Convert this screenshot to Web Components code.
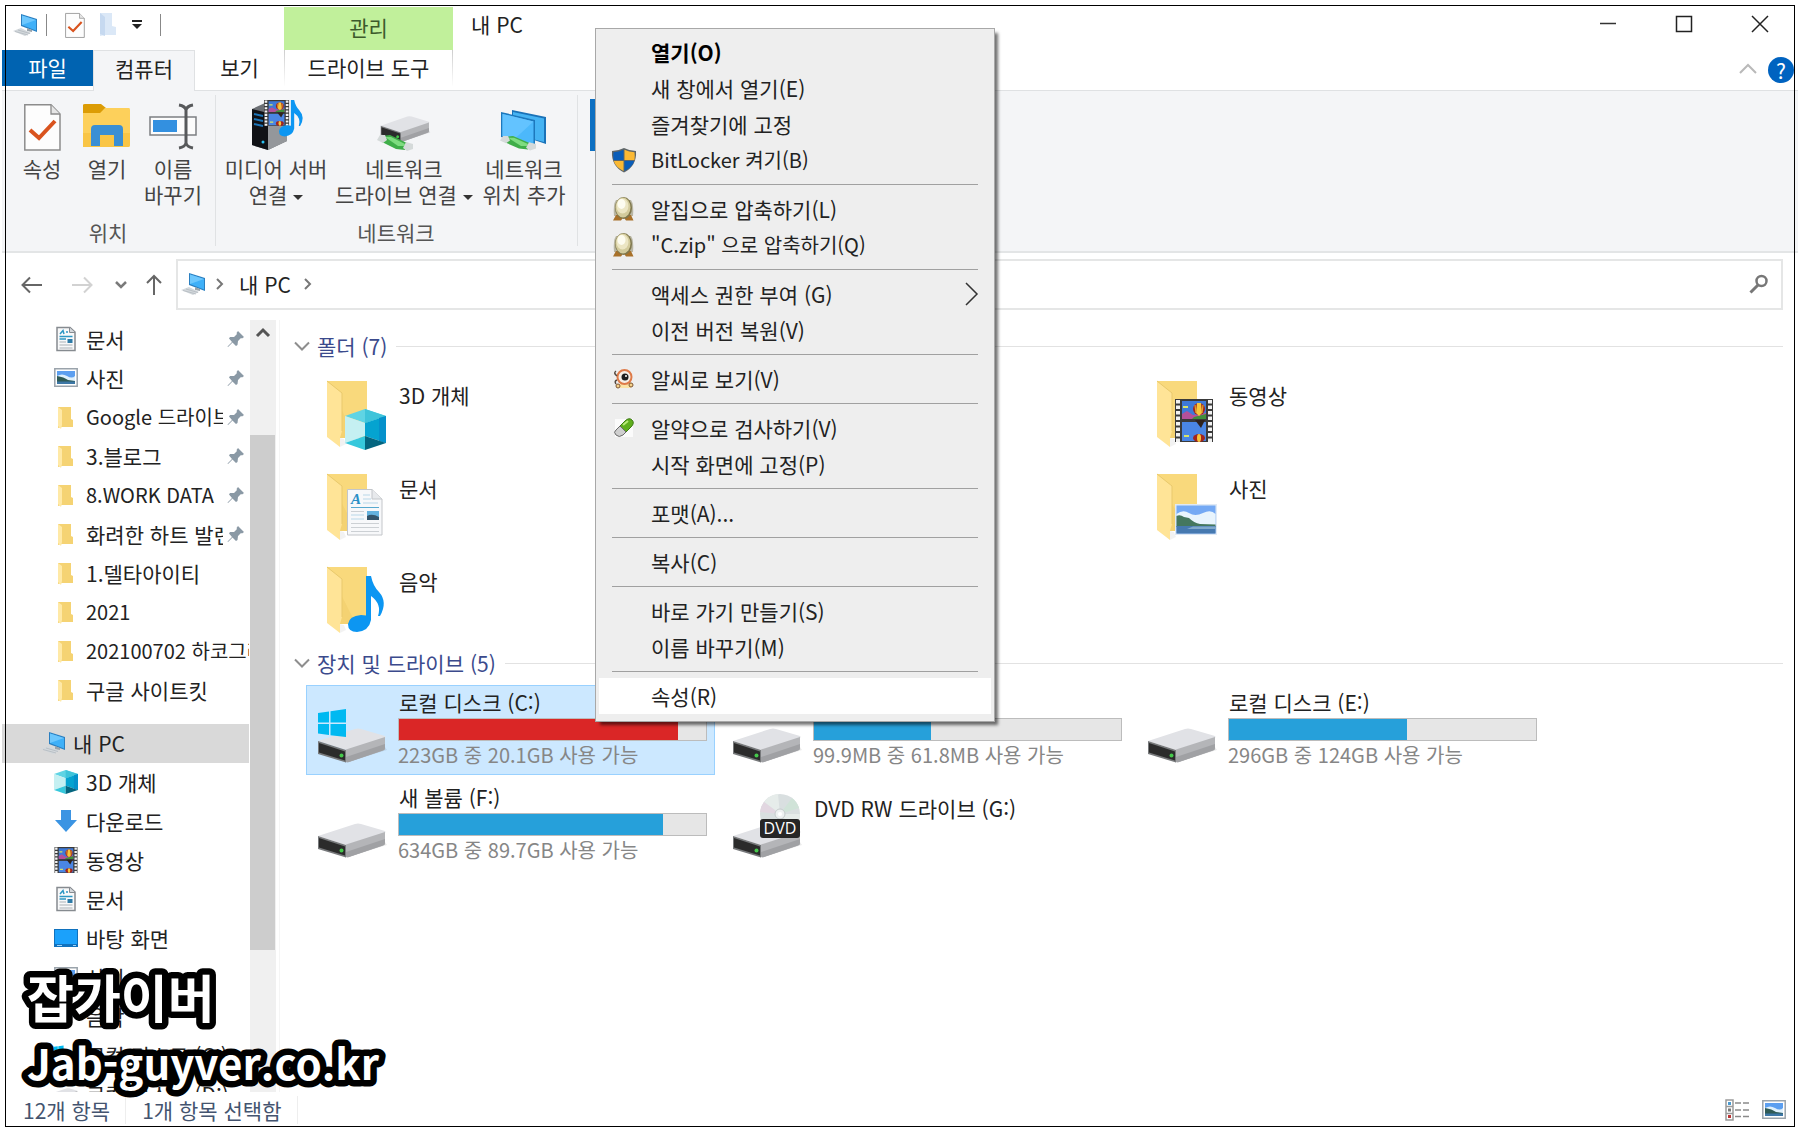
<!DOCTYPE html>
<html lang="ko">
<head>
<meta charset="utf-8">
<title>내 PC</title>
<style>
  body {
    margin: 0;
    background: #fff;
    color: #222;
    font: 21px/28px "Noto Sans CJK KR", "Noto Sans", sans-serif;
  }
</style>
</head>
<body>

<explorer-window>
  <title-bar slot="top" tool="관리">내 PC</title-bar>
  <ribbon-tabs slot="top"></ribbon-tabs>

  <ribbon-bar slot="top">
    <ribbon-group label="위치">
      <ribbon-button icon="properties" style="--w: 64px">속성</ribbon-button>
      <ribbon-button icon="open" style="--w: 66px">열기</ribbon-button>
      <ribbon-button icon="rename" style="--w: 66px">이름<br>바꾸기</ribbon-button>
    </ribbon-group>
    <ribbon-group label="네트워크">
      <ribbon-button icon="media" style="--w: 104px" drop>미디어 서버<br>연결</ribbon-button>
      <ribbon-button icon="netdrive" style="--w: 152px" drop>네트워크<br>드라이브 연결</ribbon-button>
      <ribbon-button icon="netplace" style="--w: 88px">네트워크<br>위치 추가</ribbon-button>
    </ribbon-group>
    <ribbon-group class="last">
      <ribbon-button icon="settings" style="--w: 52px"></ribbon-button>
    </ribbon-group>
  </ribbon-bar>

  <address-bar slot="top">내 PC</address-bar>

  <nav-pane slot="side">
    <nav-item icon="doc" pinned>문서</nav-item>
    <nav-item icon="photo" pinned>사진</nav-item>
    <nav-item icon="folder" pinned latin>Google 드라이브</nav-item>
    <nav-item icon="folder" pinned>3.블로그</nav-item>
    <nav-item icon="folder" pinned latin>8.WORK DATA</nav-item>
    <nav-item icon="folder" pinned>화려한 하트 발렌</nav-item>
    <nav-item icon="folder">1.델타아이티</nav-item>
    <nav-item icon="folder" latin>2021</nav-item>
    <nav-item icon="folder" latin>202100702 하코그라</nav-item>
    <nav-item icon="folder">구글 사이트킷</nav-item>
    <nav-item icon="pc" current>내 PC</nav-item>
    <nav-item icon="cube">3D 개체</nav-item>
    <nav-item icon="down">다운로드</nav-item>
    <nav-item icon="film">동영상</nav-item>
    <nav-item icon="doc">문서</nav-item>
    <nav-item icon="desktop">바탕 화면</nav-item>
    <nav-item icon="photo">사진</nav-item>
    <nav-item icon="note">음악</nav-item>
    <nav-item icon="windrive">로컬 디스크 (C:)</nav-item>
    <nav-item icon="smalldrive">로컬 디스크 (D:)</nav-item>
  </nav-pane>

  <item-section label="폴더 (7)" style="--row-gap: 3px">
    <folder-tile icon="folder3d">3D 개체</folder-tile>
    <folder-tile icon="foldervideo" style="grid-column: 3">동영상</folder-tile>
    <folder-tile icon="folderdoc">문서</folder-tile>
    <folder-tile icon="folderphoto" style="grid-column: 3">사진</folder-tile>
    <folder-tile icon="foldermusic">음악</folder-tile>
  </item-section>
  <item-section label="장치 및 드라이브 (5)" style="--row-gap: 5px">
    <drive-tile icon="drivewin" used="91" note="223GB 중 20.1GB 사용 가능" full selected>로컬 디스크 (C:)</drive-tile>
    <drive-tile icon="drive" used="38" note="99.9MB 중 61.8MB 사용 가능"></drive-tile>
    <drive-tile icon="drive" used="58" note="296GB 중 124GB 사용 가능">로컬 디스크 (E:)</drive-tile>
    <drive-tile icon="drive" used="86" note="634GB 중 89.7GB 사용 가능">새 볼륨 (F:)</drive-tile>
    <drive-tile icon="dvd">DVD RW 드라이브 (G:)</drive-tile>
  </item-section>

  <status-bar slot="bottom">
    <span>12개 항목</span>
    <span>1개 항목 선택함</span>
  </status-bar>

  <context-menu slot="over">
    <menu-item strong>열기(O)</menu-item>
    <menu-item>새 창에서 열기(E)</menu-item>
    <menu-item>즐겨찾기에 고정</menu-item>
    <menu-item icon="shield" latin>BitLocker 켜기(B)</menu-item>
    <menu-line></menu-line>
    <menu-item icon="egg">알집으로 압축하기(L)</menu-item>
    <menu-item icon="egg" latin>"C.zip" 으로 압축하기(Q)</menu-item>
    <menu-line></menu-line>
    <menu-item more>액세스 권한 부여 (G)</menu-item>
    <menu-item>이전 버전 복원(V)</menu-item>
    <menu-line></menu-line>
    <menu-item icon="alsee">알씨로 보기(V)</menu-item>
    <menu-line></menu-line>
    <menu-item icon="pill">알약으로 검사하기(V)</menu-item>
    <menu-item>시작 화면에 고정(P)</menu-item>
    <menu-line></menu-line>
    <menu-item>포맷(A)...</menu-item>
    <menu-line></menu-line>
    <menu-item>복사(C)</menu-item>
    <menu-line></menu-line>
    <menu-item>바로 가기 만들기(S)</menu-item>
    <menu-item>이름 바꾸기(M)</menu-item>
    <menu-line></menu-line>
    <menu-item active>속성(R)</menu-item>
  </context-menu>

  <site-mark slot="over" name="잡가이버" url="Jab-guyver.co.kr"></site-mark>
</explorer-window>

<script>
// ---------- drawing pieces shared by several icons ----------

const DRIVE = `
  <path d="M28 36 70 23 68 20 30 33z" fill="#000" opacity=".08"/>
  <path d="M1 14 38 2Q41 1 44 2L68 9Q69 10 68 11L29 23z" fill="#e1e2e6"/>
  <path d="M29 22.500 68 10V21Q68 23 66 23.500L32 35Q29 36 29 34z" fill="#b4b5b8"/>
  <path d="M29 30 68 17V21Q68 23 66 23.500L32 35Q29 36 29 34z" fill="#a0a1a4"/>
  <path d="M1 14 29 23V35.500L1 27z" fill="#77797b"/>
  <path d="M2 16 28 24.500V33.500L2 25.500z" fill="#2b2b2b"/>
  <circle cx="24.500" cy="28.500" r="2" fill="#45c94b"/>`;

const FOLDER = `
  <path d="M1 0H41V57H12z" fill="#f4d272"/>
  <path d="M1 0H41V57H30z" fill="#fbdc80" opacity=".7"/>
  <path d="M1 0 16 12V50L14 57V66L1 56z" fill="#ffe497"/>
  <path d="M1 0 16 12V50" fill="none" stroke="#e9c96c"/>
  <path d="M14 66 20 63 18 58 14 57z" fill="#000" opacity=".05"/>`;

const FILM = `
  <path d="M0 0H38V43H0z" fill="#3a3a3a"/>
  <path d="M3 1V43M35 1V43" stroke="#f2f2f2" stroke-width="4" stroke-dasharray="3.500 2"/>
  <path d="M7 2H31V20H7z" fill="#3e79d8"/>
  <path d="M7 23H31V42H7z" fill="#4a86e4"/>
  <path d="M7 15 12 12 18 16 31 14V20H7z" fill="#b4509a"/>
  <path d="M19 18 31 15V20H17z" fill="#3f8f3b"/>
  <ellipse cx="24" cy="10" rx="6" ry="6" fill="#a3241c"/>
  <path d="M22 4H26L27 14 24 17 21 14z" fill="#f6c63a"/>
  <path d="M20 6 21 14M28 6 27 14" stroke="#e0a52c" stroke-width="1.200"/>
  <path d="M20 21H30L26 29z" fill="#30231d"/>
  <ellipse cx="24" cy="39" rx="6" ry="4" fill="#a3241c"/>
  <ellipse cx="24" cy="39" rx="2" ry="4" fill="#f6c63a"/>
  <path d="M8 8H13M9 37H14" stroke="#d6e36b" stroke-width="2"/>`;

const CUBE = `
  <path d="M20 0 41 7 20 14 0 7z" fill="#5fd4e4"/>
  <path d="M20 0 41 7 20 14z" fill="#3fc4da"/>
  <path d="M0 7 20 14V27L0 34z" fill="#c5f0f2"/>
  <path d="M20 14 41 7V34L20 27z" fill="#05a3d0"/>
  <path d="M34 9 41 7V34L34 32z" fill="#0591cb"/>
  <path d="M0 34 20 27V41z" fill="#36c8dc"/>
  <path d="M20 27 41 34 20 41z" fill="#04657f"/>`;

const PHOTO = `
  <path d="M0 0H42V31H0z" fill="#dfe9f5"/>
  <path d="M1.500 1.500H40.500V29.500H1.500z" fill="#74a9f4"/>
  <path d="M1.500 10Q8 5 14 9T28 9 40.500 10V22H1.500z" fill="#e8f4fd"/>
  <path d="M1.500 12Q5 10 9 13L14 14Q19 19 25 20L40.500 20.500V23H1.500z" fill="#44775f"/>
  <path d="M1.500 22H40.500V29.500H1.500z" fill="#4679b0"/>
  <path d="M18 22.500H40.500V25H12z" fill="#7fa9cc"/>`;

const SHEET = `
  <path d="M.5.5H25L35 10V46H.5z" fill="#f7f8fa" stroke="#c3c6ca"/>
  <path d="M25 .5V10H35" fill="#e7e9ec" stroke="#c3c6ca"/>
  <text x="4" y="15" font-family="Liberation Serif" font-size="15" font-style="italic" font-weight="700" fill="#2b8fc6">A</text>
  <path d="M16 6H23M16 10H24M16 14H31M4 26H17M4 30H17" stroke="#b8d7e8"/>
  <path d="M4 18.500H32" stroke="#58a9cf"/>
  <path d="M4 22.500H17M4 34.500H32M4 38.500H32M4 42.500H32" stroke="#ccd0d4"/>
  <path d="M20 22H32V31H20z" fill="#64b2de"/><path d="M20 27Q25 24 32 28V31H20z" fill="#34556b"/>`;

const NOTE = `
  <path d="M18 0H23Q25 10 31 16 40 26 32 40H30Q34 28 23 20V44Q21 55 9 56 0 56 0 48 1 40 13 39L18 39.500z" fill="#0c96f2"/>`;

const WINLOGO = `<path d="M0 4 11 2.500V13.500H0zM12.500 2.300 28 0V13.500H12.500zM0 15H11V26L0 24.500zM12.500 15H28V28L12.500 26.200z" fill="#00b9f1"/>`;

const PC = `
  <path d="M8 1 24 6V19L8 13z" fill="#2b7fc0"/>
  <path d="M9 2.500 23 7V17.500L9 12z" fill="#3fb0f8"/>
  <path d="M9 2.500 23 7 9 12z" fill="#6dc7fd"/>
  <path d="M14 15 19 17V19L14 18z" fill="#9aa4ab"/>
  <path d="M0 18 8 15 18 20 12 23z" fill="#d3d8dc"/>
  <path d="M2 18.500 15 22M5 17 17 20.500" stroke="#aeb5ba" stroke-width=".7"/>`;

const CHECKDOC = `
  <path d="M.8.8H27L36 10V46H.8z" fill="#fdfdfd" stroke="#8c8c8c" stroke-width="1.500"/>
  <path d="M27 1V10H36" fill="#e6e6e6" stroke="#8c8c8c" stroke-width="1.300"/>
  <path d="M6 26 15 34 31 17" fill="none" stroke="#d9531e" stroke-width="4"/>`;

const PLUG = `
  <path d="M2 1 10 0 27 8 25 15 16 14 2 7z" fill="#3fae49"/>
  <path d="M5 2 11 2 25 9 24 11 18 11z" fill="#7edc80"/>
  <path d="M0 0H5L7 5 3 8-3 5z" fill="#d5dada"/>
  <path d="M26 7 33 9V14L27 16 23 13z" fill="#d5dada"/>`;

// name: [width, height, viewBox, drawing]
const ICONS = {
  pc: [26, 24, '0 0 26 24', PC],
  check: [20, 25, '0 0 37 47', CHECKDOC],
  paleFolder: [18, 24, '0 0 18 24', '<path d="M1 0H13V13L17 14V22H6L1 23z" fill="#dbe8f7"/><path d="M1 0 6 4V23L1 21z" fill="#c6d9f0"/>'],
  more: [12, 12, '0 0 12 12', '<path d="M1 2H11" stroke="#222" stroke-width="2"/><path d="M1 5H11L6 10z" fill="#222"/>'],
  min: [18, 18, '0 0 18 18', '<path d="M1 8.500H17" stroke="#333" stroke-width="1.500"/>'],
  max: [18, 18, '0 0 18 18', '<path d="M1.500 1.500H16.500V16.500H1.500z" fill="none" stroke="#222" stroke-width="1.500"/>'],
  close: [18, 18, '0 0 18 18', '<path d="M1 1 17 17M17 1 1 17" stroke="#222" stroke-width="1.500"/>'],
  up: [18, 12, '0 0 18 12', '<path d="M1 10 9 2 17 10" fill="none" stroke="#b9b9b9" stroke-width="2"/>'],

  properties: [37, 47, '0 0 37 47', CHECKDOC],
  open: [48, 48, '0 0 48 48', `
    <path d="M0 2Q0 1 2 1H18L23 5 18 11H0z" fill="#dc9c05"/>
    <path d="M0 10H17L22 5H46Q47 5 47 7V42Q47 44 45 44H0z" fill="#fdd05b"/>
    <path d="M0 30H47V42Q47 44 45 44H0z" fill="#f9c546"/>
    <path d="M8 26Q8 22 12 22H36Q40 22 40 26V43H31V32H17V43H8z" fill="#3a8fd4"/>`],
  rename: [48, 47, '0 0 48 47', `
    <path d="M1 13H47V31H1z" fill="#fcfcfc" stroke="#7c7f82" stroke-width="1.500"/>
    <path d="M4 16H28V28H4z" fill="#3390e0"/>
    <path d="M30 1Q36 2 37 6 38 2 44 1M37 5V41M30 44Q36 43 37 39 38 43 44 44" fill="none" stroke="#57595b" stroke-width="3"/>`],
  media: [54, 52, '0 0 54 52', `
    <path d="M3 10 16 4 38 10V42L19 51 3 46z" fill="#6c6f74"/>
    <path d="M3 10 19 14V51L3 46z" fill="#101216"/>
    <path d="M19 14 38 10V42L19 51z" fill="#94979b"/>
    <path d="M5 15 14 17M5 20 14 22M5 25 14 27" stroke="#1d75b8" stroke-width="2"/>
    <circle cx="14" cy="43" r="1.500" fill="#2cc4f5"/>
    <g transform="translate(15 1) scale(.66 .6)">${FILM}</g>
    <g transform="translate(30 1) scale(.66 .65)">${NOTE}</g>`],
  netdrive: [54, 36, '0 0 54 36', `
    <g transform="translate(3 0) scale(.72 .76)">${DRIVE}</g>
    <g transform="translate(3 20)">${PLUG}</g>`],
  netplace: [48, 42, '0 0 48 42', `
    <path d="M12 1 46 8V35L34 31 12 25z" fill="#1a72b8"/><path d="M13 3 44 9.500V33L13 25z" fill="#45b3f3"/>
    <path d="M1 3 35 11V39L1 28z" fill="#1d78bd"/><path d="M2.500 5 33.500 12.500V36.500L2.500 27z" fill="#4cb8fb"/>
    <path d="M2.500 5 33.500 12.500 14 30.500 2.500 27z" fill="#63c3ff"/>
    <g transform="translate(3 27) scale(1 .9)">${PLUG}</g>`],
  settings: [48, 52, '0 0 48 52', '<path d="M0 0H48V52H0z" fill="#0d6fc1"/>'],

  back: [22, 20, '0 0 22 20', '<path d="M21 10H2M9 2.500 1.500 10 9 17.500" fill="none" stroke="#666" stroke-width="2"/>'],
  forward: [22, 20, '0 0 22 20', '<path d="M1 10H20M13 2.500 20.500 10 13 17.500" fill="none" stroke="#d2d2d2" stroke-width="2"/>'],
  recent: [12, 10, '0 0 12 10', '<path d="M1 2 6 7 11 2" fill="none" stroke="#7a7a7a" stroke-width="2.500"/>'],
  parent: [16, 22, '0 0 16 22', '<path d="M8 21V2M1 9 8 2 15 9" fill="none" stroke="#666" stroke-width="2"/>'],
  crumb: [8, 12, '0 0 8 12', '<path d="M1 1 6 6 1 11" fill="none" stroke="#777" stroke-width="2"/>'],
  search: [20, 20, '0 0 20 20', '<circle cx="12.500" cy="7" r="5" fill="none" stroke="#777" stroke-width="2.500"/><path d="M9 11 1.500 18.500" stroke="#777" stroke-width="3"/>'],

  doc: [24, 26, '0 0 24 26', `
    <path d="M3 1.500H16L21 6V24.500H3z" fill="#f8f9fa" stroke="#868b90" stroke-width="1.500"/>
    <path d="M15.500 1.500V6.500H21" fill="#d5d9dd" stroke="#868b90"/>
    <path d="M6 8 9 4.500 10 8M12 6H14M5.500 10.500H18.500M5.500 13H12" stroke="#2d97c4" stroke-width="1.500" fill="none"/>
    <path d="M5.500 16H12M5.500 19H18.500M5.500 22H18.500" stroke="#aab0b5"/>
    <path d="M13.500 13H18.500V17H13.500z" fill="#2d7ba8"/>`],
  photo: [24, 20, '0 0 24 20', `
    <path d="M.8.8H23.200V18.200H.8z" fill="#fff" stroke="#9aa3ab" stroke-width="1.500"/>
    <path d="M3 3H21V16H3z" fill="#5c9ff0"/><path d="M3 8Q8 5 13 8T21 8V13H3z" fill="#def0fc"/>
    <path d="M3 8Q10 9 14 12L21 13V14H3z" fill="#2f5a55"/><path d="M3 13.500H21V16H3z" fill="#3d77a6"/>`],
  folder: [24, 24, '0 0 24 24', `
    <path d="M4 2H17V14L19 15V22H8L4 23z" fill="#f5d373"/>
    <path d="M4 2 8 5V20L7 24 4 21z" fill="#ffe9a6"/>`],
  cube: [24, 24, '0 0 41 41', CUBE],
  down: [24, 24, '0 0 24 24', '<path d="M7 1H17V11H23L12 23 1 11H7z" fill="#3b94e3"/>'],
  film: [24, 26, '0 0 38 43', FILM],
  desktop: [24, 20, '0 0 24 20', '<path d="M0 1H24V19H0z" fill="#1072be"/><path d="M1 2H23V16H1z" fill="#1ba1fb"/><path d="M3 17.500H8M19 17.500H22" stroke="#9fd6fb"/>'],
  note: [24, 24, '-8 -2 56 60', NOTE],
  windrive: [24, 22, '0 0 70 56', `<g transform="translate(0 20)">${DRIVE}</g>${WINLOGO}`],
  smalldrive: [24, 14, '0 0 70 37', DRIVE],
  pin: [18, 18, '0 0 18 18', '<path d="M11 1 17 7 15 8.500 14 8 11 11 10.500 15 9 16 5.500 12.500 1 17 .5 16.500 5 12 2 8.500 3 7 7 7 10 4 9.500 3z" fill="#8a99a5"/>'],
  scrollUp: [14, 10, '0 0 14 10', '<path d="M1 8 7 2 13 8" fill="none" stroke="#555" stroke-width="3"/>'],
  fold: [16, 10, '0 0 16 10', '<path d="M1 1.500 8 8.500 15 1.500" fill="none" stroke="#8e8e8e" stroke-width="2"/>'],

  folder3d: [66, 72, '0 0 66 72', `${FOLDER}<g transform="translate(19 28)">${CUBE}</g>`],
  folderdoc: [66, 72, '0 0 66 72', `${FOLDER}<g transform="translate(21 15)">${SHEET}</g>`],
  foldermusic: [66, 72, '0 0 66 72', `${FOLDER}<g transform="translate(22 9)">${NOTE}</g>`],
  foldervideo: [66, 72, '0 0 66 72', `${FOLDER}<g transform="translate(19 18)">${FILM}</g>`],
  folderphoto: [66, 72, '0 0 66 72', `${FOLDER}<g transform="translate(19 30)">${PHOTO}</g>`],
  drive: [70, 36, '0 0 70 36', DRIVE],
  drivewin: [70, 54, '0 0 70 54', `<g transform="translate(0 18)">${DRIVE}</g><g transform="translate(1 0)">${WINLOGO}</g>`],
  dvd: [70, 64, '0 0 70 64', `
    <g transform="translate(0 28)">${DRIVE}</g>
    <circle cx="48" cy="20" r="20" fill="#d9dfe0"/>
    <path d="M48 20 32 8A20 20 0 0 1 46 0zM48 20 68 20A20 20 0 0 1 62 34z" fill="#e6ecea"/>
    <path d="M48 20 28 18A20 20 0 0 1 32 8z" fill="#e2d7e1"/>
    <path d="M48 20 60 4A20 20 0 0 1 67 14z" fill="#d0e3d8"/>
    <circle cx="48" cy="20" r="5" fill="#eef1f1" stroke="#c5cbcc"/><circle cx="48" cy="20" r="2" fill="#fff"/>
    <rect x="28" y="25" width="40" height="19" rx="3" fill="#262626"/>
    <text x="48" y="40" text-anchor="middle" font-family="Open Sans" font-size="16" fill="#fff">DVD</text>`],

  shield: [26, 26, '0 0 26 26', `
    <path d="M13 1Q19 4 25 4 26 19 13 25.500 0 19 1 4 7 4 13 1z" fill="#5f6668"/>
    <path d="M12.500 2.800V13H2.500Q2 9 2.500 5.200 8 5 12.500 2.800z" fill="#0a5db8"/>
    <path d="M13.500 2.800V13H23.500Q24 9 23.500 5.200 18 5 13.500 2.800z" fill="#fbb934"/>
    <path d="M12.500 14V24Q4.500 20 2.800 14z" fill="#fbb934"/>
    <path d="M13.500 14V24Q21.500 20 23.200 14z" fill="#0a5db8"/>`],
  egg: [26, 26, '0 0 26 26', `
    <path d="M5 4Q2 8 3 20H22Q23 8 20 4z" fill="#b9b6a4"/>
    <path d="M2 24.500 5 19H20L22.500 24.500H15L12.500 21 10 24.500z" fill="#a8712a"/>
    <ellipse cx="12.500" cy="12" rx="8.500" ry="11" fill="#7f774c"/>
    <ellipse cx="12" cy="11.500" rx="7.500" ry="10" fill="#d3cb9c"/>
    <ellipse cx="11.500" cy="10" rx="6" ry="7.500" fill="#ece6c4"/>
    <ellipse cx="10.500" cy="8" rx="4" ry="5" fill="#fdfcf0"/>`],
  alsee: [26, 22, '0 0 26 22', `
    <path d="M9 14H20V20H9z" fill="#fbe3a6"/>
    <circle cx="13.500" cy="9" r="7" fill="#f6efe6" stroke="#de7a48" stroke-width="2"/>
    <circle cx="14" cy="9" r="3.500" fill="#1d1d1d"/><circle cx="15" cy="8" r="1" fill="#fff"/>
    <path d="M5 3Q2 5 6 8M6 12Q3 13 5 16" fill="none" stroke="#55493f" stroke-width="1.500"/>
    <circle cx="7" cy="18" r="2" fill="#f5d28a" stroke="#7e5430"/><circle cx="20" cy="17" r="2" fill="#f5d28a" stroke="#7e5430"/>`],
  pill: [26, 20, '0 0 26 20', `
    <path d="M4 1H22V19H4z" fill="#fbfbfb"/>
    <path d="M9 8 14 3Q18-1 21 2T20 9L15 14z" fill="#5fae1d" stroke="#3c7a12"/>
    <path d="M9 8 15 14 12 17Q8 20 5 17T5 12z" fill="#cfcfcf" stroke="#6b6b6b"/>
    <path d="M12 7 17 3" stroke="#b9ea78" stroke-width="2"/>`],
  submenu: [14, 24, '0 0 14 24', '<path d="M1 1 12 12 1 23" fill="none" stroke="#333" stroke-width="1.500"/>'],
  details: [26, 22, '0 0 26 22', `
    <path d="M1 1H8V21H1zM1 7.500H8M1 14.500H8" fill="#fff" stroke="#9a9a9a" stroke-width="1.500"/>
    <path d="M3 3H6V6H3z" fill="#4a9ad0"/><path d="M3 9.500H6V12.500H3z" fill="#777"/><path d="M3 16H6V19H3z" fill="#b33"/>
    <path d="M10 4H16M18 4H24M10 11H16M18 11H24M10 17.500H16M18 17.500H24" stroke="#8a8a8a" stroke-width="1.500"/>`],
};

// ---------- base ----------

const RESET = `
  button {
    margin: 0;
    padding: 0;
    border: 0;
    background: none;
    color: inherit;
    font: inherit;
    cursor: default;
  }
`;

class ShadowElement extends HTMLElement {

  constructor() {
    super();

    this.attachShadow({ mode: 'open' });
  }

  connectedCallback() {
    this.shadowRoot.innerHTML = `<style>:host { display: block; } ${RESET} ${this.css()}</style>${this.html()}`;
  }

  css() {
    return '';
  }

  html() {
    return '<slot></slot>';
  }

  icon(name) {
    return name ? `<explorer-icon name="${name}"></explorer-icon>` : '';
  }

}

class ExplorerIcon extends ShadowElement {

  css() {
    return `
      :host { flex: none; }
      svg { display: block; overflow: visible; }
    `;
  }

  html() {
    const [width, height, box, drawing] = ICONS[this.getAttribute('name')];

    return `<svg width="${width}" height="${height}" viewBox="${box}" aria-hidden="true">${drawing}</svg>`;
  }

}

// ---------- frame ----------

class ExplorerWindow extends ShadowElement {

  css() {
    return `
      :host {
        position: relative;
        display: flex;
        flex-direction: column;
        box-sizing: border-box;
        height: 100vh;
        padding: 2px;
        overflow: hidden;
      }
      /* thin black frame laid over the bars */
      :host::after {
        content: '';
        position: absolute;
        inset: 5px;
        border: 1px solid #000;
        pointer-events: none;
      }
      .body {
        display: flex;
        flex: 1;
        min-height: 0;
      }
      main {
        flex: 1;
        min-width: 0;
        padding: 12px 15px 0 26px;
        border-left: 1px solid #f5f5f5;
        overflow: hidden;
      }
    `;
  }

  html() {
    return `
      <slot name="top"></slot>
      <div class="body">
        <slot name="side"></slot>
        <main><slot></slot></main>
      </div>
      <slot name="bottom"></slot>
      <slot name="over"></slot>
    `;
  }

}

class TitleBar extends ShadowElement {

  css() {
    return `
      :host {
        display: flex;
        height: 48px;
      }
      .quick {
        display: flex;
        align-items: center;
        box-sizing: border-box;
        width: 282px;
        padding: 0 0 2px 11px;
      }
      .quick i { width: 1px; height: 22px; background: #888; }
      .quick i:first-of-type { margin: 0 18px 0 7px; }
      .quick i:last-of-type { margin-left: 17px; }
      .quick button + button { margin-left: 14px; }
      .tool {
        width: 169px;
        height: 43px;
        margin-top: 5px;
        background: #c1f09b;
        color: #3c5a2b;
        line-height: 40px;
        text-align: center;
      }
      h1 {
        flex: 1;
        margin: 0 0 0 18px;
        font-size: inherit;
        font-weight: 400;
        line-height: 44px;
      }
      .box {
        display: flex;
        align-items: center;
        justify-content: center;
        width: 76px;
        height: 44px;
      }
    `;
  }

  html() {
    return `
      <div class="quick">
        ${this.icon('pc')}<i></i>
        <button aria-label="속성">${this.icon('check')}</button>
        <button aria-label="새 폴더">${this.icon('paleFolder')}</button>
        <button aria-label="사용자 지정">${this.icon('more')}</button><i></i>
      </div>
      <div class="tool">${this.getAttribute('tool')}</div>
      <h1><slot></slot></h1>
      <button class="box" aria-label="최소화">${this.icon('min')}</button>
      <button class="box" aria-label="최대화">${this.icon('max')}</button>
      <button class="box" aria-label="닫기">${this.icon('close')}</button>
    `;
  }

}

class RibbonTabs extends ShadowElement {

  css() {
    return `
      :host {
        display: flex;
        height: 41px;
        background: linear-gradient(#dfe1e3, #dfe1e3) bottom / 100% 1px no-repeat;
      }
      button { height: 36px; line-height: 34px; padding-bottom: 2px; }
      .file { width: 91px; background: #0063b1; color: #fff; }
      .current {
        box-sizing: border-box;
        width: 102px;
        height: 41px;
        padding-bottom: 6px;
        border: 1px solid #dfe1e3;
        border-bottom: 0;
        background: #f4f5f7;
      }
      .view { width: 89px; }
      .tool {
        width: 169px;
        border: 1px solid;
        border-width: 0 1px;
        border-image: linear-gradient(#ccc, #fff) 1;
        box-sizing: border-box;
      }
      .right {
        display: flex;
        flex: 1;
        align-items: center;
        justify-content: flex-end;
        gap: 11px;
        padding: 0 4px 2px 0;
      }
      .help {
        width: 26px;
        height: 26px;
        padding: 0;
        border-radius: 50%;
        background: #0063c0;
        color: #fff;
        line-height: 26px;
      }
    `;
  }

  html() {
    return `
      <button class="file">파일</button>
      <button class="current">컴퓨터</button>
      <button class="view">보기</button>
      <button class="tool">드라이브 도구</button>
      <div class="right">
        <button aria-label="리본 최소화">${this.icon('up')}</button>
        <button class="help">?</button>
      </div>
    `;
  }

}

class RibbonBar extends ShadowElement {

  css() {
    return `
      :host {
        display: flex;
        box-sizing: border-box;
        height: 162px;
        padding: 4px 0 5px;
        border-bottom: 2px solid #e3e5e6;
        background: #f4f5f7;
      }
    `;
  }

}

class RibbonGroup extends ShadowElement {

  css() {
    return `
      :host {
        display: flex;
        flex-direction: column;
        justify-content: space-between;
        border-right: 1px solid #e0e2e4;
        padding: 0 9px 0 8px;
      }
      :host(.last) { border: 0; padding-left: 10px; }
      .row { display: flex; }
      .label { color: #555; text-align: center; }
    `;
  }

  html() {
    return `
      <div class="row"><slot></slot></div>
      <div class="label">${this.getAttribute('label') || ''}</div>
    `;
  }

}

class RibbonButton extends ShadowElement {

  css() {
    return `
      button {
        width: var(--w);
        color: #444;
        line-height: 26px;
        white-space: nowrap;
      }
      .pic {
        display: flex;
        align-items: flex-end;
        justify-content: center;
        height: 56px;
        margin-bottom: 4px;
      }
      b {
        display: inline-block;
        margin-left: 6px;
        border: 5px solid transparent;
        border-top-color: #333;
        border-bottom: 0;
        vertical-align: middle;
      }
    `;
  }

  html() {
    return `
      <button>
        <span class="pic">${this.icon(this.getAttribute('icon'))}</span>
        <slot></slot>${this.hasAttribute('drop') ? '<b></b>' : ''}
      </button>
    `;
  }

}

class AddressBar extends ShadowElement {

  css() {
    return `
      :host {
        display: flex;
        align-items: center;
        box-sizing: border-box;
        height: 67px;
        padding: 0 15px 4px 19px;
      }
      .go { display: flex; align-items: center; width: 155px; }
      .go button:nth-child(2) { margin-left: 28px; }
      .go button:nth-child(3) { margin-left: 22px; }
      .go button:nth-child(4) { margin-left: 19px; }
      .path {
        display: flex;
        flex: 1;
        align-items: center;
        box-sizing: border-box;
        height: 51px;
        padding: 0 12px 2px 3px;
        border: 2px solid #e5e6e6;
      }
      .path > :nth-child(2) { margin: 0 15px 0 9px; }
      .path > :nth-child(4) { flex: 1; margin-left: 13px; }
    `;
  }

  html() {
    return `
      <div class="go">
        <button aria-label="뒤로">${this.icon('back')}</button>
        <button aria-label="앞으로">${this.icon('forward')}</button>
        <button aria-label="최근 위치">${this.icon('recent')}</button>
        <button aria-label="위로">${this.icon('parent')}</button>
      </div>
      <div class="path">
        ${this.icon('pc')}
        ${this.icon('crumb')}
        <button><slot></slot></button>
        ${this.icon('crumb')}
        <button aria-label="검색">${this.icon('search')}</button>
      </div>
    `;
  }

}

// ---------- side pane ----------

class NavPane extends ShadowElement {

  css() {
    return `
      :host {
        display: flex;
        width: 277px;
        overflow: hidden;
      }
      nav { width: 247px; overflow: hidden; }
      .scroll {
        display: flex;
        flex-direction: column;
        width: 26px;
        margin-left: 1px;
        background: #f0f0f0;
      }
      .scroll button { height: 26px; padding-left: 6px; }
      .before { flex: 89; }
      .thumb { flex: 515; width: 25px; background: #cdcdcd; }
      .after { flex: 142; }
    `;
  }

  html() {
    return `
      <nav><slot></slot></nav>
      <div class="scroll">
        <button aria-label="위로 스크롤">${this.icon('scrollUp')}</button>
        <div class="before"></div>
        <div class="thumb"></div>
        <div class="after"></div>
      </div>
    `;
  }

}

class NavItem extends ShadowElement {

  css() {
    return `
      a {
        display: flex;
        align-items: center;
        gap: 8px;
        box-sizing: border-box;
        height: 39px;
        padding: 0 0 2px 52px;
        color: inherit;
        text-decoration: none;
        white-space: nowrap;
      }
      span { flex: 1; overflow: hidden; }
      :host([latin]) { font-size: 20px; }
      :host([pinned]) a { padding-right: 4px; gap: 4px; }
      :host([pinned]) span { margin-left: 4px; }
      :host([current]) { margin-top: 14px; background: #d9d9d9; }
      :host([current]) a { padding-left: 39px; gap: 6px; }
    `;
  }

  html() {
    return `
      <a href="#">
        ${this.icon(this.getAttribute('icon'))}
        <span><slot></slot></span>
        ${this.hasAttribute('pinned') ? this.icon('pin') : ''}
      </a>
    `;
  }

}

// ---------- content ----------

class ItemSection extends ShadowElement {

  css() {
    return `
      :host { margin-bottom: 5px; }
      h2 {
        display: flex;
        align-items: center;
        margin: 0 0 8px -12px;
        color: #3b4a8c;
        font-size: inherit;
        font-weight: 400;
      }
      h2 span { margin: 0 9px 0 7px; }
      h2::after {
        content: '';
        flex: 1;
        height: 1px;
        background: #e2e2e2;
      }
      .grid {
        display: grid;
        grid-template-columns: repeat(auto-fill, 409px);
        gap: var(--row-gap) 6px;
      }
    `;
  }

  html() {
    return `
      <h2>${this.icon('fold')}<span>${this.getAttribute('label')}</span></h2>
      <div class="grid"><slot></slot></div>
    `;
  }

}

class FolderTile extends ShadowElement {

  css() {
    return `
      :host {
        display: flex;
        gap: 7px;
        box-sizing: border-box;
        height: 90px;
        padding: 13px 0 0 20px;
      }
    `;
  }

  html() {
    return `${this.icon(this.getAttribute('icon'))}<span><slot></slot></span>`;
  }

}

class DriveTile extends ShadowElement {

  css() {
    return `
      :host {
        display: flex;
        gap: 11px;
        box-sizing: border-box;
        height: 90px;
        padding: 2px 7px 0 10px;
        border: 1px solid transparent;
      }
      :host([selected]) { border-color: #99d1ff; background: #cce8ff; }
      explorer-icon { align-self: flex-end; margin-bottom: 11px; }
      .text { flex: 1; }
      .name { min-height: 28px; padding-left: 1px; }
      :host(:not([note])) .name { padding-top: 11px; }
      .bar {
        box-sizing: border-box;
        height: 23px;
        margin-top: 2px;
        border: 1px solid #bcbcbc;
        background: #e6e6e6;
      }
      .bar div { width: var(--used); height: 100%; background: #26a0da; }
      :host([full]) .bar div { background: #da2626; }
      .note { color: #868686; font-size: 20px; }
    `;
  }

  html() {
    const note = this.getAttribute('note');
    const usage = note ? `
      <div class="bar"><div style="--used: ${this.getAttribute('used')}%"></div></div>
      <div class="note">${note}</div>
    ` : '';

    return `
      ${this.icon(this.getAttribute('icon'))}
      <div class="text">
        <div class="name"><slot></slot></div>
        ${usage}
      </div>
    `;
  }

}

class StatusBar extends ShadowElement {

  css() {
    return `
      :host {
        display: flex;
        align-items: center;
        box-sizing: border-box;
        height: 38px;
        padding: 0 12px 2px 0;
        color: #44546f;
      }
      ::slotted(span) { padding: 0 15px 0 16px; border-right: 1px solid #eee; }
      ::slotted(span:first-child) { padding-left: 21px; }
      .views {
        display: flex;
        flex: 1;
        align-items: center;
        justify-content: flex-end;
        gap: 11px;
      }
    `;
  }

  html() {
    return `
      <slot></slot>
      <div class="views">
        <button aria-label="자세히">${this.icon('details')}</button>
        <button aria-label="큰 아이콘">${this.icon('photo')}</button>
      </div>
    `;
  }

}

// ---------- things that float over the window ----------

class ContextMenu extends ShadowElement {

  css() {
    return `
      :host {
        position: absolute;
        top: 28px;
        left: 595px;
        box-sizing: border-box;
        width: 400px;
        padding: 5px 3px 7px;
        border: 1px solid #a8a8a8;
        background: #eee;
        box-shadow: 4px 4px 3px -1px rgba(0, 0, 0, .55);
      }
    `;
  }

}

class MenuItem extends ShadowElement {

  css() {
    return `
      button {
        display: flex;
        align-items: center;
        width: 100%;
        height: 36px;
        padding: 0 12px;
        text-align: left;
      }
      .pic { width: 40px; }
      .text { flex: 1; }
      :host([latin]) { font-size: 20px; }
      :host([strong]) { color: #000; font-weight: 700; }
      :host([active]) { background: #fff; }
    `;
  }

  html() {
    return `
      <button>
        <span class="pic">${this.icon(this.getAttribute('icon'))}</span>
        <span class="text"><slot></slot></span>
        ${this.hasAttribute('more') ? this.icon('submenu') : ''}
      </button>
    `;
  }

}

class MenuLine extends ShadowElement {

  css() {
    return `
      :host {
        height: 1px;
        margin: 6px 13px;
        background: #a0a0a0;
      }
    `;
  }

}

class SiteMark extends ShadowElement {

  css() {
    return `
      :host {
        position: absolute;
        bottom: 38px;
        left: 20px;
      }
      svg { display: block; overflow: visible; }
      text {
        fill: #fff;
        stroke: #000;
        stroke-width: 13px;
        stroke-linejoin: round;
        paint-order: stroke;
        font-weight: 700;
      }
      .name { font-size: 51px; }
      .url { font-size: 42px; }
    `;
  }

  html() {
    return `
      <svg width="370" height="130">
        <text class="name" x="7" y="54">${this.getAttribute('name')}</text>
        <text class="url" x="7" y="116">${this.getAttribute('url')}</text>
      </svg>
    `;
  }

}

customElements.define('explorer-icon', ExplorerIcon);
customElements.define('explorer-window', ExplorerWindow);
customElements.define('title-bar', TitleBar);
customElements.define('ribbon-tabs', RibbonTabs);
customElements.define('ribbon-bar', RibbonBar);
customElements.define('ribbon-group', RibbonGroup);
customElements.define('ribbon-button', RibbonButton);
customElements.define('address-bar', AddressBar);
customElements.define('nav-pane', NavPane);
customElements.define('nav-item', NavItem);
customElements.define('item-section', ItemSection);
customElements.define('folder-tile', FolderTile);
customElements.define('drive-tile', DriveTile);
customElements.define('status-bar', StatusBar);
customElements.define('context-menu', ContextMenu);
customElements.define('menu-item', MenuItem);
customElements.define('menu-line', MenuLine);
customElements.define('site-mark', SiteMark);
</script>
</body>
</html>
